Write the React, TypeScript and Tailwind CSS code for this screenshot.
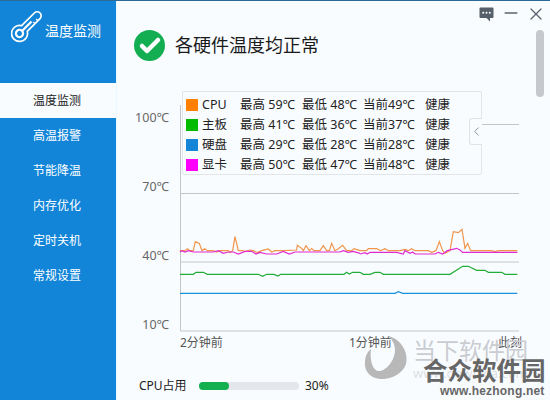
import { Check, ChevronLeft, Minus, X } from 'lucide-react'

const navItems = ['温度监测', '高温报警', '节能降温', '内存优化', '定时关机', '常规设置']

const legendRows = [
  { name: 'CPU', color: 'bg-[#ff8000]', max: '59', min: '48', now: '49' },
  { name: '主板', color: 'bg-[#00bb00]', max: '41', min: '36', now: '37' },
  { name: '硬盘', color: 'bg-[#1585d8]', max: '29', min: '28', now: '28' },
  { name: '显卡', color: 'bg-[#ff00ff]', max: '50', min: '47', now: '48' },
]

// traced from the reference in 3x crop coordinates
const orangeLeft = '30,92 45,92 52,86 60,92 70,92 76,65 88,70 96,92 104,86 112,92 130,92 140,96 150,92 175,92 180,98 188,92 195,50 205,92 220,92 225,95 240,90 250,92 262,98 275,92 295,87 305,96 315,92 340,92 380,90 382,76 395,85 400,92 408,77 418,92 425,86 432,92 450,92 460,77 470,92 478,92 485,70 495,92 505,86 518,76 530,92 545,92 552,86 570,92'
const orangeRight = '0,92 20,92 25,86 50,86 62,92 75,86 85,92 120,92 135,88 145,92 155,86 165,92 205,92 215,97 228,92 238,65 248,92 255,100 270,92 280,35 295,38 306,28 315,85 323,70 332,92 395,92 405,95 415,92 472,92'
const magentaLeft = '30,96 35,92 45,96 55,92 70,96 130,96 145,92 160,100 175,96 190,96 205,102 225,94 245,94 258,102 270,97 290,102 320,102 340,94 358,102 375,96 440,96 480,96 510,96 520,92 535,97 550,94 570,100'
const magentaRight = '0,102 15,98 22,102 30,97 110,97 130,102 135,92 150,100 158,96 165,102 225,102 235,97 248,102 262,92 290,85 300,90 308,97 472,97'
const greenLeft = '30,163 70,163 78,157 100,157 112,163 265,163 278,169 290,163 312,163 324,168 332,163 522,163 530,157 538,162 548,157 570,157'
const greenRight = '0,157 10,163 30,163 45,157 60,157 70,163 270,163 308,139 325,139 350,151 375,151 385,157 425,157 435,163 472,163'
const blueLeft = '30,220 570,220'
const blueRight = '0,220 105,220 115,215 128,220 472,220'

function Thermometer() {
  return (
    <svg width="32" height="33" viewBox="0 0 32 33" fill="none" stroke="white" strokeWidth="1.7" className="shrink-0">
      <g transform="translate(8.5 23.5) rotate(45)">
        <path d="M-4 -7 V-25 A4 4 0 0 1 4 -25 V-7 A8 8 0 1 1 -4 -7 Z" />
        <circle cx="0" cy="0" r="3.6" strokeWidth="2.2" />
        <path d="M0 -4 V-17" strokeWidth="2.2" />
        <path d="M1.5 -22 H4 M1.5 -18 H4" strokeWidth="1.2" />
      </g>
    </svg>
  )
}

function Watermark() {
  return (
    <div className="absolute left-[360px] top-[335px] w-[190px] h-[65px] pointer-events-none">
      <svg width="50" height="46" viewBox="0 0 50 46" className="absolute left-0 top-0">
        <path d="M28 0 C42 3 49 18 46 28 C43 38 30 44 20 43 C10 42 4 35 5 26 C5 20 8 15 11 13 C10 20 11 33 18 35 C26 36 35 24 35 14 C35 8 32 3 28 0 Z" fill="#b8b8b8" />
      </svg>
      <div className="absolute left-[53px] top-[1px] text-[23px] leading-[26px] text-[#c9ccd0] whitespace-nowrap">当下软件园</div>
      <div className="absolute left-[53px] top-[29px] text-[13px] leading-[16px] text-[#dcdfe2] whitespace-nowrap">www.downxia.com</div>
      <div className="absolute left-[63px] top-[21px] text-[24.5px] leading-[28px] font-semibold text-[#666] whitespace-nowrap">合众软件园</div>
      <div className="absolute left-[80px] top-[48px] text-[12px] leading-[14px] font-bold tracking-[0.2px] text-[#666] whitespace-nowrap font-['Liberation_Sans',sans-serif]">www.hezhong.net</div>
    </div>
  )
}

export default function App() {
  return (
    <div className="relative w-[550px] h-[400px] flex overflow-hidden bg-[#f9fcff] border-t border-[#2a6a96] font-['Noto_Sans','Noto_Sans_CJK_SC',sans-serif]">
      <aside className="w-[116px] shrink-0 bg-[#1285d8] flex flex-col">
        <div className="h-[82px] flex items-start gap-[2px] pl-[11px] pt-[9px]">
          <Thermometer />
          <span className="mt-[11px] text-[14px] leading-[20px] text-white">温度监测</span>
        </div>
        <nav className="flex flex-col">
          {navItems.map((item, i) => (
            <div
              key={item}
              className={`h-[35px] pl-[33px] flex items-center text-[12px] ${i === 0 ? 'bg-[#f9fcff] text-[#222]' : 'text-white'}`}
            >
              {item}
            </div>
          ))}
        </nav>
      </aside>

      <main className="flex-1 min-w-0 flex flex-col border-l border-[#e6fbff]">
        <div className="h-[29px] flex items-start justify-end pr-[4px] pt-[3px]">
          <svg width="15" height="15" viewBox="0 0 15 15" className="mt-[3px]">
            <path d="M1.5 0.5 H13.5 Q14.5 0.5 14.5 1.5 V10 Q14.5 11 13.5 11 H11 V14.5 L7.5 11 H1.5 Q0.5 11 0.5 10 V1.5 Q0.5 0.5 1.5 0.5 Z" fill="#55606a" />
            <circle cx="4.2" cy="5.8" r="1" fill="white" />
            <circle cx="7.5" cy="5.8" r="1" fill="white" />
            <circle cx="10.8" cy="5.8" r="1" fill="white" />
          </svg>
          <Minus size={20} strokeWidth={1.7} className="ml-[7px] -mt-[1px] text-[#5a646e]" />
          <X size={20} strokeWidth={1.5} className="ml-[5px] text-[#5a646e]" />
        </div>

        <div className="flex items-start">
          <div className="flex-1 min-w-0">
            <div className="h-[60px] flex items-start gap-[10px] pl-[17px]">
              <span className="w-[31px] h-[31px] rounded-full bg-[#14ae52] flex items-center justify-center">
                <Check size={24} strokeWidth={4.5} className="text-white" />
              </span>
              <span className="mt-[1px] text-[18px] leading-[28px] text-[#1a1a1a]">各硬件温度均正常</span>
            </div>

            <div className="flex h-[250px]">
              <div className="w-[63px] shrink-0 flex flex-col items-end gap-[55px] pt-[21px] pr-[11px] text-[12.5px] leading-[14px] text-[#666]">
                <span>100℃</span>
                <span>70℃</span>
                <span>40℃</span>
                <span>10℃</span>
              </div>
              <div className="relative flex-1">
                <svg width="360" height="250" viewBox="170 90 360 250" className="absolute -left-[10px] top-0">
                  <path d="M180.5 105 V331 H519 M180 193.5 H519 M180 262 H519 M482 124.5 H519" fill="none" stroke="#c2c6ca" strokeWidth="1" />
                  <g transform="translate(170 220) scale(0.3333)" fill="none" strokeWidth="1.2">
                    <polyline points={greenLeft} stroke="#22ac38" vectorEffect="non-scaling-stroke" />
                    <polyline points={blueLeft} stroke="#1a90dc" vectorEffect="non-scaling-stroke" />
                    <polyline points={orangeLeft} stroke="#f0954a" vectorEffect="non-scaling-stroke" />
                    <polyline points={magentaLeft} stroke="#e02bd0" vectorEffect="non-scaling-stroke" />
                  </g>
                  <g transform="translate(360 220) scale(0.3333)" fill="none" strokeWidth="1.2">
                    <polyline points={greenRight} stroke="#22ac38" vectorEffect="non-scaling-stroke" />
                    <polyline points={blueRight} stroke="#1a90dc" vectorEffect="non-scaling-stroke" />
                    <polyline points={orangeRight} stroke="#f0954a" vectorEffect="non-scaling-stroke" />
                    <polyline points={magentaRight} stroke="#e02bd0" vectorEffect="non-scaling-stroke" />
                  </g>
                </svg>

                <div className="absolute left-[2px] top-[1px] w-[300px] h-[84px] rounded-[2px] border border-[#e2e6ea] bg-[#f9fcff] pl-[3px] pt-[3px] text-[12.5px] leading-[20px] text-[#222]">
                  {legendRows.map(row => (
                    <div key={row.name} className="h-[20px] flex items-center whitespace-nowrap">
                      <span className={`w-[12px] h-[12px] ${row.color}`} />
                      <span className="w-[42px] pl-[4px]">{row.name}</span>
                      <span className="w-[62px]">最高 {row.max}℃</span>
                      <span className="w-[61px]">最低 {row.min}℃</span>
                      <span className="w-[62px]">当前{row.now}℃</span>
                      <span>健康</span>
                    </div>
                  ))}
                </div>
                <div className="absolute left-[289px] top-[28px] w-[13px] h-[27px] rounded-l-[3px] border border-r-0 border-[#dfe3e7] bg-[#f9fcff] flex items-center justify-center">
                  <ChevronLeft size={15} strokeWidth={1.5} className="shrink-0 text-[#86909a]" />
                </div>
              </div>
            </div>

            <div className="h-[20px] ml-[63px] mr-[14px] mt-[-6px] flex justify-between items-start text-[12px] leading-[18px] text-[#555]">
              <span>2分钟前</span>
              <span className="ml-[20px]">1分钟前</span>
              <span>此刻</span>
            </div>
          </div>

          <div className="w-[8px] h-[67px] shrink-0 mr-[6px] rounded-full bg-[#c5c9cd]" />
        </div>

        <div className="mt-[23px] pl-[22px] flex items-center text-[12px] leading-[18px] text-[#222]">
          <span className="w-[60px]">CPU占用</span>
          <div className="w-[100px] h-[8px] rounded-full bg-[#e3e6ea]">
            <div className="w-[30px] h-[8px] rounded-full bg-[#12b04e]" />
          </div>
          <span className="ml-[6px]">30%</span>
        </div>
      </main>

      <Watermark />
    </div>
  )
}
